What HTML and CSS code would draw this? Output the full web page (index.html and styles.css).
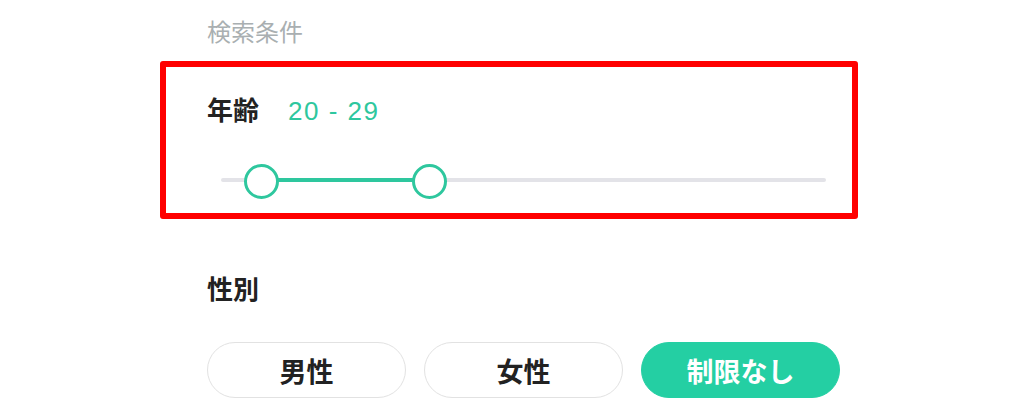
FILE: index.html
```html
<!DOCTYPE html>
<html lang="ja">
<head>
<meta charset="utf-8">
<link rel="stylesheet" href="styles.css">
</head>
<body>
<div class="page">
  <div class="caption">検索条件</div>
  <section class="age-box">
    <div class="age-head">
      <span class="label">年齢</span>
      <span class="range">20 - 29</span>
    </div>
    <div class="slider">
      <div class="track"></div>
      <div class="fill" style="left:40px;width:168px"></div>
      <div class="thumb" style="left:40px"></div>
      <div class="thumb" style="left:208px"></div>
    </div>
  </section>
  <section class="gender">
    <div class="label">性別</div>
    <div class="options">
      <button class="opt">男性</button>
      <button class="opt">女性</button>
      <button class="opt active">制限なし</button>
    </div>
  </section>
</div>
</body>
</html>
```
FILE: styles.css
```css
* { box-sizing: border-box; }
html, body { margin: 0; background: #ffffff; }
body {
  font-family: "Noto Sans CJK JP", "Noto Sans", sans-serif;
  color: #222222;
}
.page {
  width: 1020px;
  height: 420px;
  padding: 14px 0 0 160px;
  overflow: hidden;
}
.caption {
  padding-left: 47px;
  font-size: 24px;
  line-height: 34px;
  color: #a9afb1;
  height: 47px;
}
.age-box {
  width: 698px;
  height: 158px;
  border: 6px solid #ff0000;
  border-radius: 3px;
  padding: 22px 26px 0 41px;
}
.age-head {
  display: flex;
  align-items: baseline;
  gap: 29px;
  height: 40px;
  line-height: 40px;
}
.label {
  font-size: 26px;
  font-weight: 700;
  color: #222222;
}
.range {
  font-family: "Liberation Sans", "Noto Sans", sans-serif;
  font-size: 26px;
  letter-spacing: 1.5px;
  color: #2ec79e;
}
.slider {
  position: relative;
  margin: 34px 0 0 14px;
  height: 36px;
}
.track {
  position: absolute;
  left: 0;
  right: 0;
  top: 15px;
  height: 4px;
  border-radius: 2px;
  background: #e3e3e8;
}
.fill {
  position: absolute;
  top: 15px;
  height: 4px;
  background: #2ec79e;
}
.thumb {
  position: absolute;
  top: 1px;
  width: 35px;
  height: 35px;
  margin-left: -17.5px;
  border-radius: 50%;
  border: 3.5px solid #2ec79e;
  background: #ffffff;
}
.gender {
  padding: 51px 0 0 47px;
}
.gender .label {
  line-height: 36px;
  height: 36px;
}
.options {
  display: grid;
  grid-template-columns: repeat(3, 199px);
  gap: 18px;
  margin-top: 36px;
}
.opt {
  height: 56px;
  border: 1.5px solid #e2e2e2;
  border-radius: 28px;
  background: #ffffff;
  font-family: "Noto Sans CJK JP", "Noto Sans", sans-serif;
  font-size: 27px;
  font-weight: 700;
  color: #222222;
  padding: 0;
}
.opt.active {
  background: #24cfa3;
  border-color: #24cfa3;
  color: #ffffff;
}
```
